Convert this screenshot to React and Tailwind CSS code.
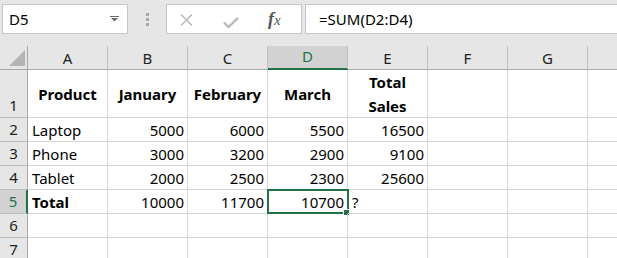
import React from "react";

const cols = ["A", "B", "C", "D", "E", "F", "G"];
const font = { fontFamily: '"Noto Sans", "Open Sans", sans-serif' };

const rows = [
  { n: 2, cells: ["Laptop", "5000", "6000", "5500", "16500", "", ""] },
  { n: 3, cells: ["Phone", "3000", "3200", "2900", "9100", "", ""] },
  { n: 4, cells: ["Tablet", "2000", "2500", "2300", "25600", "", ""] },
  { n: 5, cells: ["Total", "10000", "11700", "10700", "?", "", ""] },
  { n: 6, cells: ["", "", "", "", "", "", ""] },
  { n: 7, cells: ["", "", "", "", "", "", ""] },
];

function Toolbar() {
  return (
    <div className="flex h-[46px] items-start bg-[#e6e6e6] pt-[4px]">
      <div className="ml-[2px] flex h-[30px] w-[126px] items-center justify-between border border-[#c6c6c6] bg-white pl-[6px] pr-[8px] text-[15px] text-black">
        <span>D5</span>
        <svg width="9" height="6" viewBox="0 0 9 6">
          <rect x="0" y="0" width="9" height="1" fill="#6b6b6b" />
          <path d="M1 2 L8 2 L4.5 5.5 Z" fill="#6b6b6b" />
        </svg>
      </div>
      <div className="flex h-[30px] w-[38px] flex-col items-center justify-center gap-[2px]">
        <div className="h-[3px] w-[3px] bg-[#a6a6a6]" />
        <div className="h-[3px] w-[3px] bg-[#a6a6a6]" />
        <div className="h-[3px] w-[3px] bg-[#a6a6a6]" />
      </div>
      <div className="flex h-[30px] w-[136px] items-start border border-[#c6c6c6] bg-white">
        <svg className="ml-[13px] mt-[9px]" width="13" height="12" viewBox="0 0 13 12">
          <path d="M1 0.5 L12 11.5 M12 0.5 L1 11.5" stroke="#b8b8b8" strokeWidth="1.5" fill="none" />
        </svg>
        <svg className="ml-[30px] mt-[12px]" width="16" height="11" viewBox="0 0 16 11">
          <path d="M1 5.5 L5.5 10 L15 0.8" stroke="#b8b8b8" strokeWidth="2.3" fill="none" />
        </svg>
        <span
          className="ml-[29px] mt-[2px] text-[18px] font-bold italic leading-[24px] text-[#555]"
          style={{ fontFamily: '"Liberation Serif", "DejaVu Serif", serif' }}
        >
          f<span className="text-[15px] font-normal">x</span>
        </span>
      </div>
      <div className="ml-[3px] flex h-[30px] flex-1 items-center border border-r-0 border-[#c6c6c6] bg-white pl-[13px] text-[15px] text-black">
        =SUM(D2:D4)
      </div>
    </div>
  );
}

function HeaderRow() {
  return (
    <div className="flex h-[24px] bg-[#e6e6e6]">
      <div className="relative h-[24px] w-[28px] shrink-0 border-b border-r border-[#a8a8a8]">
        <svg className="absolute left-[9px] top-[4px]" width="16" height="16" viewBox="0 0 16 16">
          <path d="M16 0 L16 16 L0 16 Z" fill="#b4b4b4" />
        </svg>
      </div>
      {cols.map((c) => {
        const sel = c === "D";
        return (
          <div
            key={c}
            className={
              sel
                ? "flex h-[24px] w-[80px] shrink-0 items-center justify-center border-r border-r-[#bdbdbd] border-b-2 border-b-[#217346] bg-[#d2d2d2] pb-[1px] text-[15px] text-[#217346]"
                : "flex h-[24px] w-[80px] shrink-0 items-center justify-center border-r border-r-[#bdbdbd] border-b border-b-[#a8a8a8] pt-[1px] text-[15px] text-[#222]"
            }
          >
            {c}
          </div>
        );
      })}
      <div className="h-[24px] flex-1 border-b border-[#a8a8a8]" />
    </div>
  );
}

function RowHeader({ n, tall, sel }) {
  return (
    <div
      className={
        (tall ? "h-[48px] " : "h-[24px] ") +
        "flex w-[28px] shrink-0 items-end justify-center border-b border-b-[#bdbdbd] leading-[24px] text-[15px] " +
        (sel
          ? "border-r-2 border-r-[#217346] bg-[#d2d2d2] text-[#217346]"
          : "border-r border-r-[#a8a8a8] bg-[#e6e6e6] text-[#222]")
      }
    >
      {n}
    </div>
  );
}

function Row1() {
  const labels = ["Product", "January", "February", "March"];
  return (
    <div className="flex h-[48px]">
      <RowHeader n={1} tall />
      {labels.map((l) => (
        <div
          key={l}
          className="flex h-[48px] w-[80px] shrink-0 items-center justify-center border-b border-r border-[#d4d4d4] text-[15px] font-bold leading-[24px] text-black"
        >
          {l}
        </div>
      ))}
      <div className="flex h-[48px] w-[80px] shrink-0 flex-col items-center border-b border-r border-[#d4d4d4] text-[15px] font-bold leading-[24px] text-black">
        <span>Total</span>
        <span>Sales</span>
      </div>
      <div className="h-[48px] w-[80px] shrink-0 border-b border-r border-[#d4d4d4]" />
      <div className="h-[48px] w-[80px] shrink-0 border-b border-r border-[#d4d4d4]" />
      <div className="h-[48px] flex-1 border-b border-[#d4d4d4]" />
    </div>
  );
}

function DataRow({ r }) {
  const sel = r.n === 5;
  return (
    <div className="flex h-[24px]">
      <RowHeader n={r.n} sel={sel} />
      {r.cells.map((v, i) => {
        const isText = i === 0 || v === "?";
        const bold = sel && i === 0;
        const active = sel && i === 3;
        return (
          <div
            key={i}
            className={
              "relative flex h-[24px] w-[80px] shrink-0 items-center border-b border-r border-[#d4d4d4] text-[15px] leading-[24px] text-black " +
              (isText ? "justify-start pl-[4px] " : "justify-end pr-[3px] ") +
              (bold ? "font-bold" : "")
            }
          >
            <span className="pt-[1px]">{v}</span>
            {active && (
              <>
                <div className="absolute -left-[1px] -top-[1px] h-[25px] w-[82px] border-2 border-[#217346]" />
                <div className="absolute -bottom-[3px] -right-[3px] h-[7px] w-[7px] border border-white bg-[#217346]" />
              </>
            )}
          </div>
        );
      })}
      <div className="h-[24px] flex-1 border-b border-[#d4d4d4]" />
    </div>
  );
}

export default function App() {
  return (
    <div className="h-[258px] w-[617px] overflow-hidden bg-white" style={font}>
      <Toolbar />
      <HeaderRow />
      <Row1 />
      {rows.map((r) => (
        <DataRow key={r.n} r={r} />
      ))}
    </div>
  );
}
